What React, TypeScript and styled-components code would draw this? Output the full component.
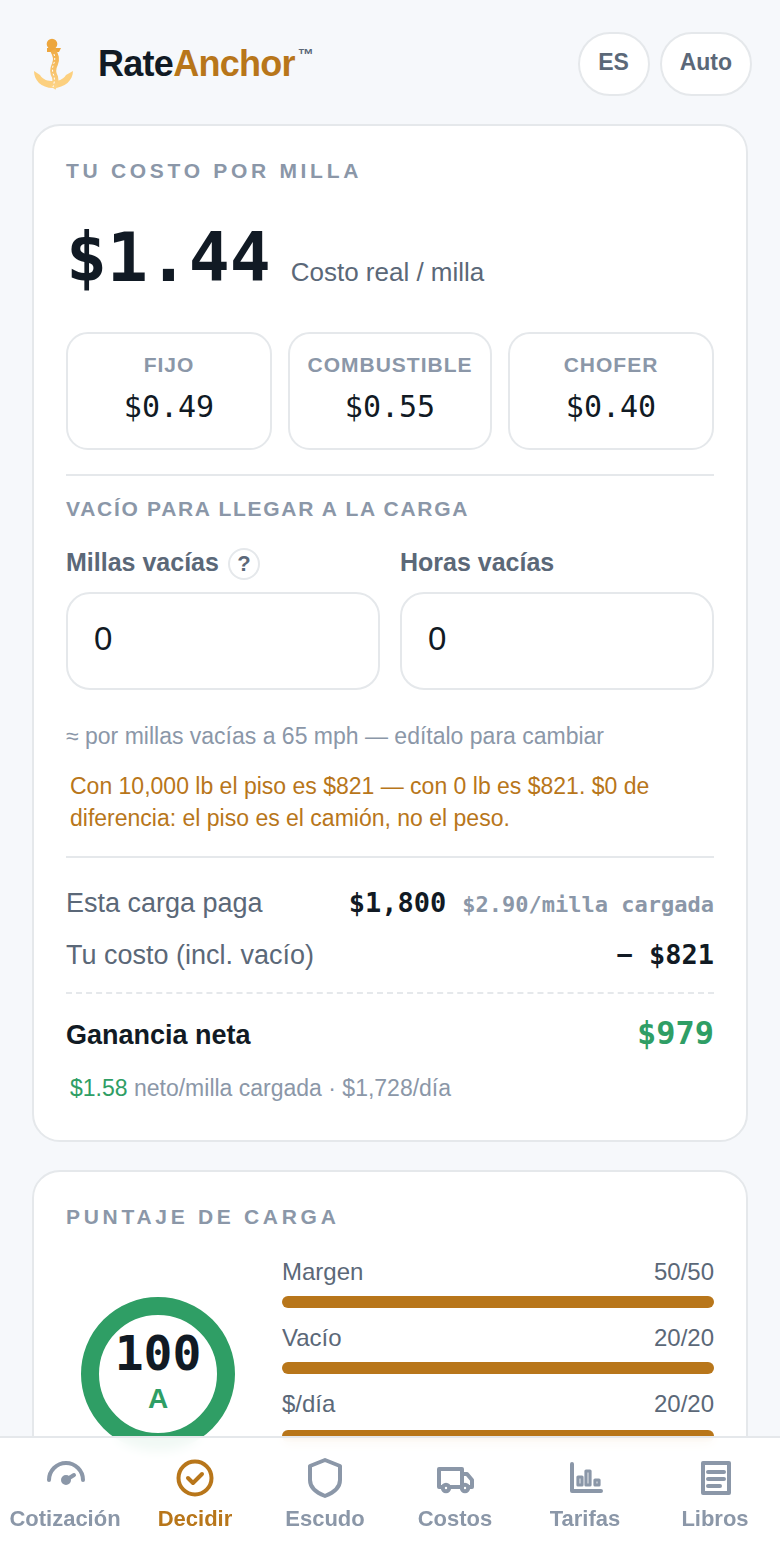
import styled, { createGlobalStyle } from "styled-components";

const Global = createGlobalStyle`
  html, body {
    margin: 0;
    height: 1560px;
    overflow: hidden;
    background: #f6f8fb;
    font-family: "Liberation Sans", Arial, sans-serif;
  }
  * { box-sizing: border-box; }
`;

const mono = `"DejaVu Sans Mono", "Liberation Mono", monospace`;
const ink = "#111a24";
const slate = "#5b6878";
const muted = "#8b97a8";
const line = "#e5e8eb";
const amber = "#b8761a";
const green = "#2f9e65";

const Page = styled.div`
  width: 780px;
  height: 1560px;
  overflow: hidden;
  position: relative;
`;

const Header = styled.header`
  height: 124px;
  padding: 32px 28px 0 28px;
  display: flex;
  align-items: flex-start;
`;

const Brand = styled.div`
  flex: 1;
  display: flex;
  align-items: center;
  height: 64px;
  gap: 18px;
`;

const Wordmark = styled.div`
  font-size: 36px;
  font-weight: 700;
  letter-spacing: -0.72px;
  color: ${ink};
  display: flex;
`;

const Accent = styled.span`
  color: ${amber};
`;

const Tm = styled.sup`
  font-size: 16px;
  line-height: 1;
  color: ${slate};
  margin: 4px 0 0 3px;
  letter-spacing: 0;
`;

const Pill = styled.button`
  height: 64px;
  min-width: 72px;
  padding: 0 18px 3px;
  margin-left: 10px;
  border-radius: 32px;
  border: 2px solid ${line};
  background: #fff;
  color: ${slate};
  font: 700 23px "Liberation Sans", Arial, sans-serif;
`;

const Card = styled.section`
  margin: 0 32px 28px;
  padding: 32px;
  background: #fff;
  border: 2px solid ${line};
  border-radius: 28px;
`;

const Eyebrow = styled.div`
  font-size: 21px;
  line-height: 26px;
  font-weight: 700;
  letter-spacing: 3.7px;
  color: ${muted};
`;

const HeroRow = styled.div`
  display: flex;
  align-items: baseline;
  gap: 20px;
  margin-top: 33px;
  height: 82px;
  line-height: 82px;
`;

const HeroValue = styled.div`
  font-family: ${mono};
  font-weight: 700;
  font-size: 68px;
  color: ${ink};
`;

const HeroUnit = styled.div`
  font-size: 26px;
  color: ${slate};
`;

const Stats = styled.div`
  display: grid;
  grid-template-columns: 206px 204px 206px;
  gap: 16px;
  margin-top: 33px;
`;

const Stat = styled.div`
  height: 118px;
  border: 2px solid ${line};
  border-radius: 22px;
  display: flex;
  flex-direction: column;
  align-items: center;
  padding-top: 18px;
`;

const StatLabel = styled.div`
  font-size: 21px;
  line-height: 26px;
  font-weight: 700;
  letter-spacing: 1px;
  color: ${muted};
`;

const StatValue = styled.div`
  font-family: ${mono};
  font-size: 30px;
  line-height: 36px;
  margin-top: 11px;
  color: ${ink};
`;

const Divider = styled.div<{ $top?: number }>`
  height: 2px;
  margin-top: ${(p) => p.$top ?? 0}px;
  background: ${line};
`;

const SectionLabel = styled.div`
  font-size: 21px;
  line-height: 26px;
  font-weight: 700;
  letter-spacing: 1.7px;
  color: ${muted};
  margin-top: 20px;
`;

const Fields = styled.div`
  display: grid;
  grid-template-columns: 1fr 1fr;
  gap: 20px;
  margin-top: 26px;
`;

const FieldLabel = styled.div`
  display: flex;
  align-items: center;
  gap: 9px;
  height: 32px;
  font-size: 25px;
  font-weight: 700;
  line-height: 28px;
  color: ${slate};
`;

const FieldText = styled.span`
  margin-top: -4px;
`;

const Help = styled.span`
  width: 32px;
  height: 32px;
  border-radius: 50%;
  border: 2px solid ${line};
  display: flex;
  align-items: center;
  justify-content: center;
  font-size: 22px;
`;

const Input = styled.div`
  height: 98px;
  margin-top: 12px;
  border: 2px solid ${line};
  border-radius: 24px;
  padding: 0 0 4px 26px;
  display: flex;
  align-items: center;
  font-size: 33px;
  color: ${ink};
`;

const Hint = styled.div`
  margin-top: 30px;
  font-size: 23px;
  line-height: 32px;
  color: ${muted};
`;

const Note = styled.div`
  margin: 18px 0 22px;
  padding-left: 4px;
  font-size: 23px;
  line-height: 32px;
  color: ${amber};
`;

const Row = styled.div`
  display: flex;
  justify-content: space-between;
  align-items: baseline;
  height: 52px;
  line-height: 52px;
`;

const RowLabel = styled.div`
  font-size: 27px;
  color: ${slate};
`;

const RowValue = styled.div`
  font-family: ${mono};
  font-weight: 700;
  font-size: 27px;
  color: ${ink};
`;

const RowExtra = styled.span`
  font-size: 22px;
  color: ${muted};
  margin-left: 16px;
`;

const Rows = styled.div`
  margin-top: 19px;
`;

const Dashed = styled.div`
  border-top: 2px dashed ${line};
  margin-top: 11px;
`;

const NetRow = styled.div`
  display: flex;
  justify-content: space-between;
  align-items: center;
  margin-top: 16px;
  height: 50px;
`;

const NetLabel = styled.div`
  font-size: 27px;
  font-weight: 700;
  color: ${ink};
`;

const NetValue = styled.div`
  font-family: ${mono};
  font-weight: 700;
  font-size: 32px;
  margin-top: -4px;
  color: ${green};
`;

const NetSub = styled.div`
  margin: 12px 0 4px;
  padding-left: 4px;
  font-size: 23px;
  line-height: 32px;
  color: ${muted};
`;

const Good = styled.span`
  color: ${green};
`;

const ScoreBody = styled.div`
  display: grid;
  grid-template-columns: 184px 1fr;
  gap: 32px;
  margin-top: 27px;
`;

const Ring = styled.div`
  position: relative;
  width: 154px;
  height: 154px;
  margin: 40px 0 0 15px;
  border-radius: 50%;
  border: 18px solid ${green};
  display: flex;
  flex-direction: column;
  align-items: center;
`;

const RingScore = styled.div`
  font-family: ${mono};
  font-weight: 700;
  font-size: 48px;
  line-height: 54px;
  margin-top: 11px;
  color: ${ink};
`;

const RingGrade = styled.div`
  font-size: 28px;
  font-weight: 700;
  line-height: 34px;
  margin-top: 2px;
  color: ${green};
`;

const Metric = styled.div`
  margin-bottom: 15px;
`;

const MetricHead = styled.div`
  display: flex;
  justify-content: space-between;
  font-size: 24px;
  line-height: 30px;
  color: ${slate};
`;

const Track = styled.div<{ $top: number }>`
  height: 12px;
  margin-top: ${(p) => p.$top}px;
  border-radius: 6px;
  background: ${amber};
`;

const Nav = styled.nav`
  position: fixed;
  left: 0;
  right: 0;
  top: 1436px;
  height: 124px;
  display: grid;
  grid-template-columns: repeat(6, 1fr);
  border-top: 2px solid ${line};
  background: rgba(255, 255, 255, 0.93);
  backdrop-filter: blur(6px);
`;

const NavItem = styled.div<{ $active?: boolean }>`
  display: flex;
  flex-direction: column;
  align-items: center;
  color: ${(p) => (p.$active ? amber : muted)};
  font-size: 22px;
  font-weight: 700;
`;

const NavIcon = styled.svg`
  width: 48px;
  height: 48px;
  margin-top: 16px;
  fill: none;
  stroke: currentColor;
  stroke-width: 2;
  stroke-linecap: round;
  stroke-linejoin: round;
`;

const NavText = styled.div`
  margin-top: 3px;
  line-height: 28px;
`;

const Logo = () => (
  <svg width="52" height="56" viewBox="0 0 52 56" aria-hidden="true">
    <defs>
      <linearGradient id="anchor" x1="0" y1="0" x2="0" y2="1">
        <stop offset="0" stopColor="#f0ac45" />
        <stop offset="1" stopColor="#fdd58a" />
      </linearGradient>
    </defs>
    <circle cx="24" cy="8" r="5.300" fill="#eda63d" />
    <path d="M19 12h14l-2 4H19z" fill="#eda63d" />
    <path
      d="M6 35l6 4c3 5 8 6 13 6s10-1 13-6l7-4c0 9-8 17-20 17S6 44 6 35z"
      fill="#fcd07f"
    />
    <path
      d="M25 14c3 6 4 9 2 14-2 4-3 8 0 13 1 4 0 8-2 11"
      stroke="url(#anchor)"
      strokeWidth="6"
      fill="none"
    />
    <path
      d="M26 18c1 3 1 6 0 9-2 4-2 9 0 13 1 4 0 8-1 11"
      stroke="#fff"
      strokeWidth="1"
      strokeDasharray="2 2"
      fill="none"
    />
  </svg>
);

const metrics = [
  { name: "Margen", score: "50/50", top: 9 },
  { name: "Vacío", score: "20/20", top: 9 },
  { name: "$/día", score: "20/20", top: 11 },
];

export default function App() {
  return (
    <Page>
      <Global />
      <Header>
        <Brand>
          <Logo />
          <Wordmark>
            Rate<Accent>Anchor</Accent>
            <Tm>™</Tm>
          </Wordmark>
        </Brand>
        <Pill>ES</Pill>
        <Pill>Auto</Pill>
      </Header>

      <Card>
        <Eyebrow>TU COSTO POR MILLA</Eyebrow>
        <HeroRow>
          <HeroValue>$1.44</HeroValue>
          <HeroUnit>Costo real / milla</HeroUnit>
        </HeroRow>
        <Stats>
          <Stat>
            <StatLabel>FIJO</StatLabel>
            <StatValue>$0.49</StatValue>
          </Stat>
          <Stat>
            <StatLabel>COMBUSTIBLE</StatLabel>
            <StatValue>$0.55</StatValue>
          </Stat>
          <Stat>
            <StatLabel>CHOFER</StatLabel>
            <StatValue>$0.40</StatValue>
          </Stat>
        </Stats>
        <Divider $top={24} />
        <SectionLabel>VACÍO PARA LLEGAR A LA CARGA</SectionLabel>
        <Fields>
          <div>
            <FieldLabel>
              <FieldText>Millas vacías</FieldText>
              <Help>?</Help>
            </FieldLabel>
            <Input>0</Input>
          </div>
          <div>
            <FieldLabel>
              <FieldText>Horas vacías</FieldText>
            </FieldLabel>
            <Input>0</Input>
          </div>
        </Fields>
        <Hint>≈ por millas vacías a 65 mph — edítalo para cambiar</Hint>
        <Note>
          Con 10,000 lb el piso es $821 — con 0 lb es $821. $0 de diferencia: el piso es el
          camión, no el peso.
        </Note>
        <Divider />
        <Rows>
          <Row>
            <RowLabel>Esta carga paga</RowLabel>
            <RowValue>
              $1,800<RowExtra>$2.90/milla cargada</RowExtra>
            </RowValue>
          </Row>
          <Row>
            <RowLabel>Tu costo (incl. vacío)</RowLabel>
            <RowValue>− $821</RowValue>
          </Row>
        </Rows>
        <Dashed />
        <NetRow>
          <NetLabel>Ganancia neta</NetLabel>
          <NetValue>$979</NetValue>
        </NetRow>
        <NetSub>
          <Good>$1.58</Good> neto/milla cargada · $1,728/día
        </NetSub>
      </Card>

      <Card>
        <Eyebrow>PUNTAJE DE CARGA</Eyebrow>
        <ScoreBody>
          <Ring>
            <RingScore>100</RingScore>
            <RingGrade>A</RingGrade>
          </Ring>
          <div>
            {metrics.map((m) => (
              <Metric key={m.name}>
                <MetricHead>
                  <span>{m.name}</span>
                  <span>{m.score}</span>
                </MetricHead>
                <Track $top={m.top} />
              </Metric>
            ))}
          </div>
        </ScoreBody>
      </Card>

      <Nav>
        <NavItem>
          <NavIcon viewBox="0 0 24 24">
            <path d="M4 13a8.500 8.500 0 0 1 17 0" />
            <path d="M12.500 13l4-2.500" />
            <circle cx="12.500" cy="13" r="1.500" fill="currentColor" />
          </NavIcon>
          <NavText>Cotización</NavText>
        </NavItem>
        <NavItem $active>
          <NavIcon viewBox="0 0 24 24">
            <circle cx="12" cy="12" r="8.250" />
            <path d="M8.500 12l2.500 2.500 4.500-4.500" />
          </NavIcon>
          <NavText>Decidir</NavText>
        </NavItem>
        <NavItem>
          <NavIcon viewBox="0 0 24 24">
            <path d="M12 3l7.500 3v7c0 4-3.500 6.500-7.500 8-4-1.500-7.500-4-7.500-8V6z" />
          </NavIcon>
          <NavText>Escudo</NavText>
        </NavItem>
        <NavItem>
          <NavIcon viewBox="0 0 24 24">
            <path d="M5.500 16.500H4v-9h11.500v9H9.500" />
            <path d="M15.500 10h2.500l2.500 3v3.500h-1.500" />
            <path d="M15.500 16.500H15" />
            <circle cx="7.500" cy="17" r="1.600" />
            <circle cx="17" cy="17" r="1.600" />
          </NavIcon>
          <NavText>Costos</NavText>
        </NavItem>
        <NavItem>
          <NavIcon viewBox="0 0 24 24">
            <path d="M5.500 5v13.500H20" />
            <rect x="8.500" y="11.500" width="2" height="4" strokeWidth="1.600" />
            <rect x="12.500" y="8.500" width="2" height="7" strokeWidth="1.600" />
            <rect x="17" y="13" width="2" height="2.500" strokeWidth="1.600" />
          </NavIcon>
          <NavText>Tarifas</NavText>
        </NavItem>
        <NavItem>
          <NavIcon viewBox="0 0 24 24">
            <rect x="6" y="4.500" width="13" height="15" />
            <path d="M8.500 9h8M8.500 12.500h8M8.500 16h6" />
          </NavIcon>
          <NavText>Libros</NavText>
        </NavItem>
      </Nav>
    </Page>
  );
}
